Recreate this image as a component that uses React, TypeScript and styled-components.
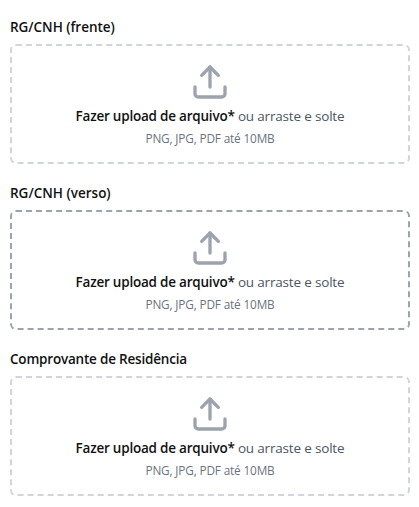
import React from "react";
import styled, { createGlobalStyle } from "styled-components";

const GlobalStyle = createGlobalStyle`
  *, *::before, *::after { box-sizing: border-box; }
  body { margin: 0; background: #fff; font-family: "Segoe UI", "Open Sans", "Noto Sans", sans-serif; }
`;

const Form = styled.main`
  display: flex;
  flex-direction: column;
  gap: 19px;
  padding: 17px 9px 0 10px;
`;

const Field = styled.section`
  display: flex;
  flex-direction: column;
  gap: 7px;
`;

const Label = styled.h2<{ $spacing: number }>`
  margin: 0;
  height: 20px;
  font-size: 13.5px;
  line-height: 20px;
  font-weight: 600;
  letter-spacing: ${(p) => p.$spacing}px;
  color: #111;
  white-space: nowrap;
`;

const DropZone = styled.div<{ $active?: boolean }>`
  display: flex;
  flex-direction: column;
  align-items: center;
  height: 120px;
  padding-top: 16px;
  border: 2px dashed ${(p) => (p.$active ? "#9ca3af" : "#d1d5db")};
  border-radius: 6px;
`;

const Icon = styled.svg`
  width: 40px;
  height: 40px;
  color: #9ca3af;
`;

const Prompt = styled.p`
  margin: 4px 0 0;
  font-size: 13.5px;
  line-height: 20px;
  letter-spacing: -0.18px;
  color: #4b5563;
  white-space: nowrap;
`;

const Strong = styled.span`
  font-weight: 600;
  letter-spacing: -0.22px;
  color: #111;
`;

const Hint = styled.p`
  margin: 4px 0 0;
  font-size: 11.8px;
  line-height: 16px;
  letter-spacing: -0.16px;
  color: #6b7280;
  white-space: nowrap;
`;

const fields = [
  { label: "RG/CNH (frente)", active: false, spacing: -0.03 },
  { label: "RG/CNH (verso)", active: true, spacing: 0 },
  { label: "Comprovante de Residência", active: false, spacing: -0.2 },
];

export default function App() {
  return (
    <>
      <GlobalStyle />
      <Form>
        {fields.map((f) => (
          <Field key={f.label}>
            <Label $spacing={f.spacing}>{f.label}</Label>
            <DropZone $active={f.active}>
              <Icon viewBox="0 0 24 24" fill="none" stroke="currentColor" strokeWidth="2" strokeLinecap="round" strokeLinejoin="round">
                <path d="M21 15v4a2 2 0 0 1-2 2H5a2 2 0 0 1-2-2v-4" />
                <path d="m17 8-5-5-5 5" />
                <path d="M12 3v12" />
              </Icon>
              <Prompt><Strong>Fazer upload de arquivo*</Strong> ou arraste e solte</Prompt>
              <Hint>PNG, JPG, PDF até 10MB</Hint>
            </DropZone>
          </Field>
        ))}
      </Form>
    </>
  );
}
